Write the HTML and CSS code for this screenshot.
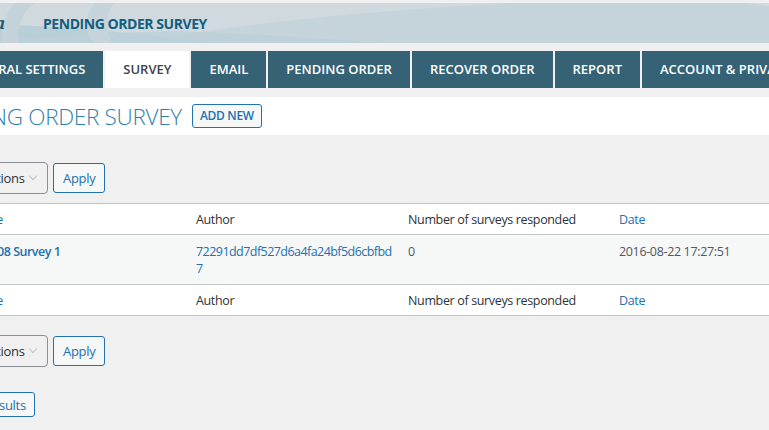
FILE: index.html
```html
<!DOCTYPE html>
<html>
<head>
<meta charset="utf-8">
<link rel="stylesheet" href="styles.css">
</head>
<body>
<div class="screen">
  <div class="wrap">
    <header class="banner">
      <svg class="banner-bg" viewBox="0 0 900 40" preserveAspectRatio="none" aria-hidden="true">
        <rect width="900" height="40" fill="#cfd9de"/>
        <path d="M560 0 C 700 10, 800 30, 900 40 L900 0 Z" fill="#d3dce1"/>
        <path d="M190 40 C 300 20, 420 8, 570 0 L 800 0 C 900 10, 950 30, 1000 40 Z" fill="#c5d4db"/>
        <path d="M0 40 L0 22 C 100 20, 180 28, 260 40 Z" fill="#b9cfd8"/>
        <path d="M0 40 C 80 36, 150 30, 230 28 C 300 30, 380 36, 440 40 Z" fill="#bcd0d8" opacity="0.8"/>
        <path d="M70 0 C 60 15, 55 30, 58 40 L 75 40 C 72 25, 78 10, 90 0 Z" fill="#c4d2d9"/>
        <path d="M150 0 C 140 15, 140 30, 150 40 L 168 40 C 160 25, 162 10, 170 0 Z" fill="#c6d3da"/>
      </svg>
      <span class="logo">a</span>
      <span class="banner-title">PENDING ORDER SURVEY</span>
    </header>

    <nav class="tabs">
      <a class="tab">GENERAL SETTINGS</a>
      <a class="tab active">SURVEY</a>
      <a class="tab">EMAIL</a>
      <a class="tab">PENDING ORDER</a>
      <a class="tab">RECOVER ORDER</a>
      <a class="tab">REPORT</a>
      <a class="tab">ACCOUNT &amp; PRIVACY</a>
    </nav>

    <div class="heading">
      <h1>PENDING ORDER SURVEY</h1>
      <a class="add-new">ADD NEW</a>
    </div>

    <div class="bulk">
      <div class="select">Bulk actions<span class="chev"></span></div>
      <button class="btn">Apply</button>
    </div>

    <table class="list">
      <thead>
        <tr>
          <th class="c-title link">Title</th>
          <th class="c-author">Author</th>
          <th class="c-num">Number of surveys responded</th>
          <th class="c-date link">Date</th>
        </tr>
      </thead>
      <tbody>
        <tr>
          <td class="c-title"><a class="row-title">2016-08 Survey 1</a></td>
          <td class="c-author"><a class="author-link">72291dd7df527d6a4fa24bf5d6cbfbd7</a></td>
          <td class="c-num">0</td>
          <td class="c-date">2016-08-22 17:27:51</td>
        </tr>
      </tbody>
      <tfoot>
        <tr>
          <th class="c-title link">Title</th>
          <th class="c-author">Author</th>
          <th class="c-num">Number of surveys responded</th>
          <th class="c-date link">Date</th>
        </tr>
      </tfoot>
    </table>

    <div class="bulk bulk-bottom">
      <div class="select">Bulk actions<span class="chev"></span></div>
      <button class="btn">Apply</button>
    </div>

    <div class="export">
      <button class="btn">Export results</button>
    </div>
  </div>
</div>
</body>
</html>
```

FILE: styles.css
```css
html, body {
  margin: 0;
  padding: 0;
  background: #f0f0f1;
}
body {
  font-family: "Open Sans", "Noto Sans", sans-serif;
  font-size: 12px;
  color: #3c434a;
}
.screen {
  width: 769px;
  height: 430px;
  overflow: hidden;
}
.wrap {
  margin-left: -56px;
  width: 900px;
}
.banner {
  position: relative;
  margin-top: 3px;
  height: 40px;
  display: flex;
  align-items: center;
  overflow: hidden;
}
.banner-bg {
  position: absolute;
  left: 0;
  top: 0;
  width: 100%;
  height: 100%;
}
.logo {
  position: relative;
  margin-left: 51px;
  width: 18px;
  font: italic bold 16px "DejaVu Serif", serif;
  color: #1d5f79;
}
.banner-title {
  position: relative;
  margin-left: 30px;
  font-weight: 700;
  font-size: 14px;
  color: #135e7e;
  letter-spacing: -0.45px;
}
.tabs {
  display: flex;
  gap: 2px;
  margin-top: 8px;
  margin-left: 2px;
  white-space: nowrap;
}
.tab {
  flex: none;
  height: 37px;
  line-height: 37px;
  padding: 0 18px;
  background: #356274;
  color: #fff;
  font-weight: 600;
  font-size: 13px;
  letter-spacing: 0;
}
.tab.active {
  background: #fff;
  color: #3c434a;
}
.heading {
  margin-top: 9px;
  height: 38px;
  background: #fff;
  display: flex;
  align-items: center;
}
h1 {
  margin: 0 0 0 -15px;
  font-weight: 300;
  font-size: 22.5px;
  color: #2f80a9;
  letter-spacing: -0.3px;
  white-space: nowrap;
}
.add-new {
  margin-left: 10px;
  height: 22px;
  line-height: 22px;
  padding: 0 7px;
  border: 1px solid #2271b1;
  border-radius: 3px;
  background: #f6f7f7;
  color: #2271b1;
  font-size: 12px;
  font-weight: 600;
  letter-spacing: -0.3px;
}
.bulk {
  margin-top: 27px;
  display: flex;
  align-items: center;
  gap: 5px;
}
.select {
  box-sizing: border-box;
  width: 104px;
  height: 32px;
  line-height: 30px;
  padding-left: 10px;
  border: 1px solid #8c8f94;
  border-radius: 4px;
  color: #2c3338;
  font-size: 13px;
  letter-spacing: -0.3px;
  display: flex;
  align-items: center;
}
.chev {
  width: 5px;
  height: 5px;
  border-right: 1px solid #c3c4c7;
  border-bottom: 1px solid #c3c4c7;
  transform: rotate(45deg);
  margin: -4px 0 0 5px;
}
.btn {
  box-sizing: border-box;
  height: 30px;
  padding: 0 9px;
  border: 1px solid #2271b1;
  border-radius: 3px;
  background: #f6f7f7;
  color: #2271b1;
  font-family: inherit;
  font-size: 13px;
  letter-spacing: -0.3px;
}
.list {
  margin-top: 9px;
  width: 900px;
  border-collapse: collapse;
  background: #fff;
  border-top: 1px solid #c3c4c7;
  border-bottom: 1px solid #c3c4c7;
  table-layout: fixed;
}
.list th, .list td {
  text-align: left;
  font-weight: 400;
  font-size: 12.5px;
  letter-spacing: -0.35px;
  padding: 0 10px;
  vertical-align: top;
}
.list th {
  height: 29px;
  line-height: 29px;
  padding-top: 1px;
  color: #2c3338;
}
.list th.link {
  color: #2271b1;
}
.list thead th {
  border-bottom: 1px solid #c3c4c7;
}
.list tfoot th {
  border-top: 1px solid #c3c4c7;
}
.list tbody tr {
  background: #f6f7f7;
}
.list td {
  height: 50px;
  padding-top: 8px;
  line-height: 17px;
  color: #50575e;
  box-sizing: border-box;
}
.list .c-title { width: 196px; padding-left: 36px; }
.list td.c-title { padding-left: 23px; }
.list .c-author { width: 196px; padding-right: 6px; }
.list .c-num { width: 191px; }
.row-title {
  color: #2271b1;
  font-weight: 600;
  letter-spacing: -0.5px;
}
.author-link {
  color: #2271b1;
  word-break: break-all;
  letter-spacing: -0.55px;
}
.bulk-bottom {
  margin-top: 19px;
}
.export {
  margin-top: 25px;
  margin-left: -7px;
}
.export .btn {
  height: 25px;
  padding: 0 8px;
}
```
